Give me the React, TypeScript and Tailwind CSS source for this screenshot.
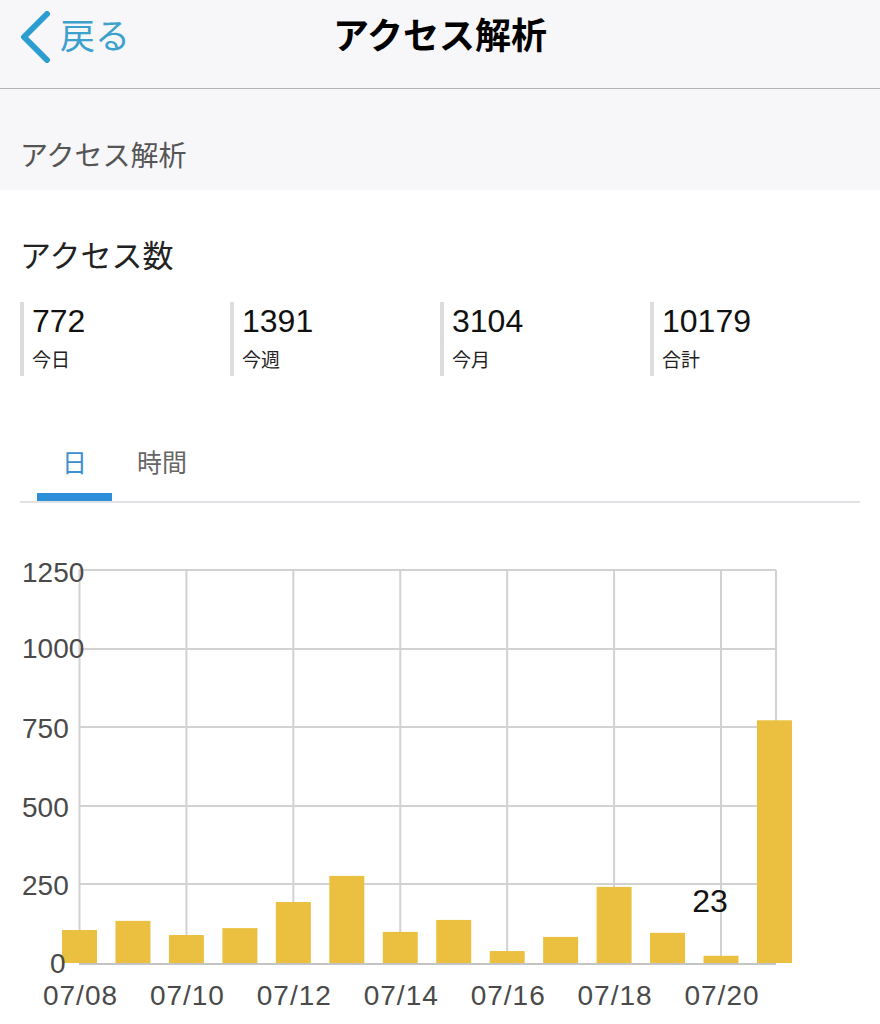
import React from "react";

const values = [105, 134, 89, 111, 194, 277, 99, 137, 38, 83, 242, 96, 23, 772];
const dates = ["07/08", "07/10", "07/12", "07/14", "07/16", "07/18", "07/20"];

const X0 = 79.5;
const STEP = 53.46;
const Y0 = 963;
const SCALE = 393 / 1250;

function Chart() {
  const font = '"Liberation Sans", "Noto Sans", sans-serif';
  const hLines = [570, 649, 727, 806, 884];
  const vLines = [0, 2, 4, 6, 8, 10, 12].map((i) => X0 + i * STEP);
  const yLabels: [string, number, number][] = [
    ["1250", 22, 582],
    ["1000", 22, 658],
    ["750", 22, 738],
    ["500", 22, 817],
    ["250", 22, 895],
    ["0", 50, 973],
  ];
  return (
    <svg
      className="block"
      width={880}
      height={521}
      viewBox="0 503 880 521"
      xmlns="http://www.w3.org/2000/svg"
    >
      {hLines.map((y) => (
        <line key={y} x1={79} x2={776} y1={y} y2={y} stroke="#d2d2d2" strokeWidth={2} />
      ))}
      {vLines.map((x) => (
        <line key={x} x1={x} x2={x} y1={570} y2={963} stroke="#d2d2d2" strokeWidth={2} />
      ))}
      <line x1={776} x2={776} y1={570} y2={963} stroke="#d2d2d2" strokeWidth={2} />
      <line x1={79} x2={776} y1={964} y2={964} stroke="#c4c4c4" strokeWidth={2} />
      {values.map((v, i) => {
        const cx = X0 + i * STEP;
        const h = v * SCALE;
        return <rect key={i} x={cx - 17.5} y={Y0 - h} width={35} height={h} fill="#ebc041" />;
      })}
      {yLabels.map(([t, x, y]) => (
        <text key={t} x={x} y={y} fontFamily={font} fontSize={28} fill="#4a4a4a">
          {t}
        </text>
      ))}
      {dates.map((d, i) => (
        <text
          key={d}
          x={X0 + i * 2 * STEP + 1}
          y={1005}
          fontFamily={font}
          fontSize={28}
          letterSpacing={1}
          textAnchor="middle"
          fill="#4a4a4a"
        >
          {d}
        </text>
      ))}
      <text x={710} y={912} fontFamily={font} fontSize={32} textAnchor="middle" fill="#111111">
        23
      </text>
    </svg>
  );
}

const stats = [
  { n: "772", l: "今日" },
  { n: "1391", l: "今週" },
  { n: "3104", l: "今月" },
  { n: "10179", l: "合計" },
];

export default function App() {
  return (
    <div
      className="w-[880px] h-[1024px] overflow-hidden bg-white"
      style={{ fontFamily: '"Liberation Sans", "Noto Sans CJK JP", sans-serif' }}
    >
      {/* Nav bar */}
      <div className="h-[89px] pb-[14px] bg-[#f7f7f9] border-b border-[#b4b4b6] grid grid-cols-[1fr_auto_1fr] items-center">
        <div className="flex items-center pl-[18px]">
          <svg width="34" height="52" viewBox="0 0 34 52" className="block">
            <path
              d="M29 3 L6 26 L29 49"
              fill="none"
              stroke="#2b9dd0"
              strokeWidth="6"
              strokeLinecap="round"
              strokeLinejoin="round"
            />
          </svg>
          <span className="ml-[8px] text-[35px] leading-[40px] text-[#3da1cd]">戻る</span>
        </div>
        <div className="text-[36px] leading-[44px] font-bold text-black">アクセス解析</div>
        <div />
      </div>

      {/* Section header */}
      <div className="h-[101px] bg-[#f7f7f9] pl-5 pt-[48px]">
        <div className="text-[28px] leading-[40px] text-[#555555]">アクセス解析</div>
      </div>

      {/* Access count */}
      <div className="px-5">
        <div className="mt-[47px] text-[31px] leading-[40px] text-[#222222]">アクセス数</div>
        <div className="mt-[25px] grid grid-cols-4">
          {stats.map((s) => (
            <div key={s.l} className="h-[74px] border-l-[4px] border-[#dddddd] pl-[8px]">
              <div className="text-[32px] leading-[38px] text-[#111111]">{s.n}</div>
              <div className="mt-[6px] text-[19px] leading-[30px] text-[#222222]">{s.l}</div>
            </div>
          ))}
        </div>

        {/* Tabs */}
        <div className="mt-[69px] border-b-2 border-[#e2e2e6]">
          <div className="flex ml-[17px]">
            <div className="px-[25px] pb-[12px] border-b-[8px] border-[#2d8fd9] text-[25px] leading-[36px] text-[#3b8fcf]">
              日
            </div>
            <div className="px-[25px] pb-[12px] border-b-[8px] border-transparent text-[25px] leading-[36px] text-[#666666]">
              時間
            </div>
          </div>
        </div>
      </div>

      <Chart />
    </div>
  );
}
